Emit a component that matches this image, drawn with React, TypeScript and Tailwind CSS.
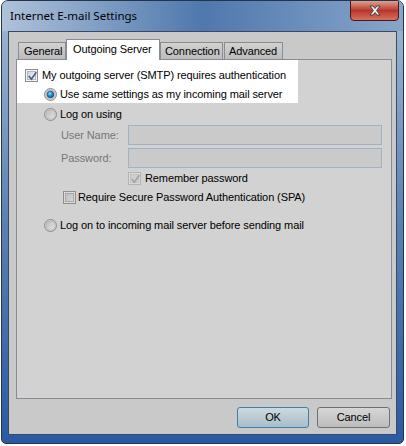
import React from "react";

function CheckBox({ checked, disabled, onWhite }: { checked?: boolean; disabled?: boolean; onWhite?: boolean }) {
  return (
    <span
      className={`relative shrink-0 w-[13px] h-[13px] border ${disabled ? "border-[#b4b4b4]" : "border-[#8e8f8f]"} ${onWhite ? "bg-[#f4f4f4]" : "bg-[#dadada]"} p-[1px]`}
    >
      <span
        className={`block w-full h-full border ${disabled ? "border-[#c4c4c4] bg-[#cfcfcf]" : onWhite ? "border-[#b2b6bb] bg-gradient-to-br from-[#d0d4d9] to-[#f7f7f7]" : "border-[#a9a9a9] bg-gradient-to-br from-[#bdbdbd] to-[#d6d6d6]"}`}
      />
      {checked && (
        <svg className="absolute left-[1px] top-[1px]" width="11" height="11" viewBox="0 0 11 11">
          <path
            d="M2.3 5.6 L4.4 8.2 L8.8 1.9"
            fill="none"
            stroke={disabled ? "#a4a4a4" : "#4a5f8e"}
            strokeWidth="1.7"
            strokeLinecap="square"
          />
        </svg>
      )}
    </span>
  );
}

function Radio({ checked }: { checked?: boolean }) {
  return (
    <svg className="shrink-0" width="13" height="13" viewBox="0 0 13 13">
      <defs>
        <linearGradient id="rg" x1="0" y1="0" x2="1" y2="1">
          <stop offset="0" stopColor="#b9b9b9" />
          <stop offset="1" stopColor="#e6e6e6" />
        </linearGradient>
        <radialGradient id="dot" cx="0.4" cy="0.35" r="0.7">
          <stop offset="0" stopColor="#8ee4ff" />
          <stop offset="0.5" stopColor="#1f8fd0" />
          <stop offset="1" stopColor="#0b4a8a" />
        </radialGradient>
      </defs>
      <circle cx="6.5" cy="6.5" r="6" fill="#d8d8d8" stroke="#8c8c8c" strokeWidth="1" />
      <circle cx="6.5" cy="6.5" r="4.6" fill="url(#rg)" stroke="#a8a8a8" strokeWidth="0.6" />
      {checked && <circle cx="6.5" cy="6.5" r="3.3" fill="url(#dot)" stroke="#0c3f6f" strokeWidth="0.6" />}
    </svg>
  );
}

export default function App() {
  return (
    <div className="w-[406px] h-[446px] bg-white pl-[1px] font-['Liberation_Sans',Arial,sans-serif] text-[11px] tracking-[-0.1px] text-black">
      <div className="relative w-[403px] h-[444px] border border-[#26344a] rounded-t-[7px] rounded-b-[5px] bg-gradient-to-b from-[#a4b9d3] via-[#5b80b3] to-[#2a5aa2] flex flex-col overflow-hidden">
        {/* title bar */}
        <div className="h-[30px] shrink-0 bg-gradient-to-r from-[#afc2da] via-[#4f78ad] to-[#88a5ca] flex items-center pl-[8px]">
          <span className="font-['Noto_Sans',sans-serif] text-[11.5px] tracking-normal text-black mt-[-1px]">Internet E-mail Settings</span>
        </div>
        {/* close button */}
        <div className="absolute left-[348px] top-[-1px] w-[49px] h-[21px] rounded-b-[4px] border border-[#4d1712] bg-gradient-to-b from-[#d9a093] via-[#b8342a] to-[#d7705f] flex items-center justify-center">
          <svg width="12" height="11" viewBox="0 0 12 11">
            <path
              d="M1 1 H4 L6 3.5 L8 1 H11 L7.6 5.5 L11 10 H8 L6 7.5 L4 10 H1 L4.4 5.5 Z"
              fill="#f2f2f2"
              stroke="#3a3a3a"
              strokeWidth="0.9"
              strokeLinejoin="round"
            />
          </svg>
        </div>
        {/* client area */}
        <div className="mx-[6px] mb-[8px] flex-1 border border-[#3a4a60] bg-[#c9c9c9] flex flex-col">
          <div className="pl-[7px] pr-[4px] pt-[7px]">
            {/* tabs */}
            <div className="flex items-end h-[20px] pl-[2px] relative z-10">
              <div className="w-[48px] h-[17px] border border-b-0 border-[#898c95] bg-gradient-to-b from-[#d2d2d2] to-[#bcbcbc] pl-[5px] leading-[16px]">
                General
              </div>
              <div className="w-[94px] h-[21px] -mb-px border border-b-0 border-[#898c95] bg-white pl-[6px] leading-[18px]">
                Outgoing Server
              </div>
              <div className="w-[63px] h-[17px] border border-b-0 border-[#898c95] bg-gradient-to-b from-[#d2d2d2] to-[#bcbcbc] pl-[4px] leading-[16px]">
                Connection
              </div>
              <div className="ml-[1px] w-[59px] h-[17px] border border-b-0 border-[#898c95] bg-gradient-to-b from-[#d2d2d2] to-[#bcbcbc] pl-[4px] leading-[16px]">
                Advanced
              </div>
            </div>
            {/* panel */}
            <div className="h-[340px] border border-[#898c95] bg-[#d2d2d2] flex flex-col">
              <div className="w-[281px] h-[43px] bg-white pt-[9px] pl-[8px] flex flex-col">
                <div className="flex items-center h-[13px] gap-[4px]">
                  <CheckBox checked onWhite />
                  <span className="leading-[13px]">My outgoing server (SMTP) requires authentication</span>
                </div>
                <div className="flex items-center h-[13px] gap-[3px] mt-[6px] pl-[19px]">
                  <Radio checked />
                  <span className="leading-[13px]">Use same settings as my incoming mail server</span>
                </div>
              </div>
              <div className="flex items-center h-[13px] gap-[3px] mt-[5px] pl-[27px]">
                <Radio />
                <span className="leading-[13px]">Log on using</span>
              </div>
              <div className="flex items-center h-[20px] mt-[4px] pl-[44px] pr-[9px]">
                <span className="w-[67px] text-[#777777]">User Name:</span>
                <div className="flex-1 h-[20px] border border-[#9fb2c6] bg-[#cacaca]" />
              </div>
              <div className="flex items-center h-[20px] mt-[3px] pl-[44px] pr-[9px]">
                <span className="w-[67px] text-[#777777]">Password:</span>
                <div className="flex-1 h-[20px] border border-[#9fb2c6] bg-[#cacaca]" />
              </div>
              <div className="flex items-center h-[13px] gap-[4px] mt-[4px] pl-[111px]">
                <CheckBox checked disabled />
                <span className="leading-[13px]">Remember password</span>
              </div>
              <div className="flex items-center h-[13px] gap-[2px] mt-[6px] pl-[46px]">
                <CheckBox />
                <span className="leading-[13px]">Require Secure Password Authentication (SPA)</span>
              </div>
              <div className="flex items-center h-[13px] gap-[3px] mt-[15px] pl-[27px]">
                <Radio />
                <span className="leading-[13px]">Log on to incoming mail server before sending mail</span>
              </div>
            </div>
          </div>
          {/* buttons */}
          <div className="flex justify-end gap-[8px] mt-[8px] pr-[6px]">
            <div className="w-[72px] h-[21px] rounded-[3px] border border-[#3c7fb1] bg-gradient-to-b from-[#cdd9e0] to-[#a9bdca] flex items-center justify-center">
              OK
            </div>
            <div className="w-[73px] h-[21px] rounded-[3px] border border-[#707070] bg-gradient-to-b from-[#d6d6d6] to-[#bdbdbd] flex items-center justify-center">
              Cancel
            </div>
          </div>
        </div>
      </div>
    </div>
  );
}
